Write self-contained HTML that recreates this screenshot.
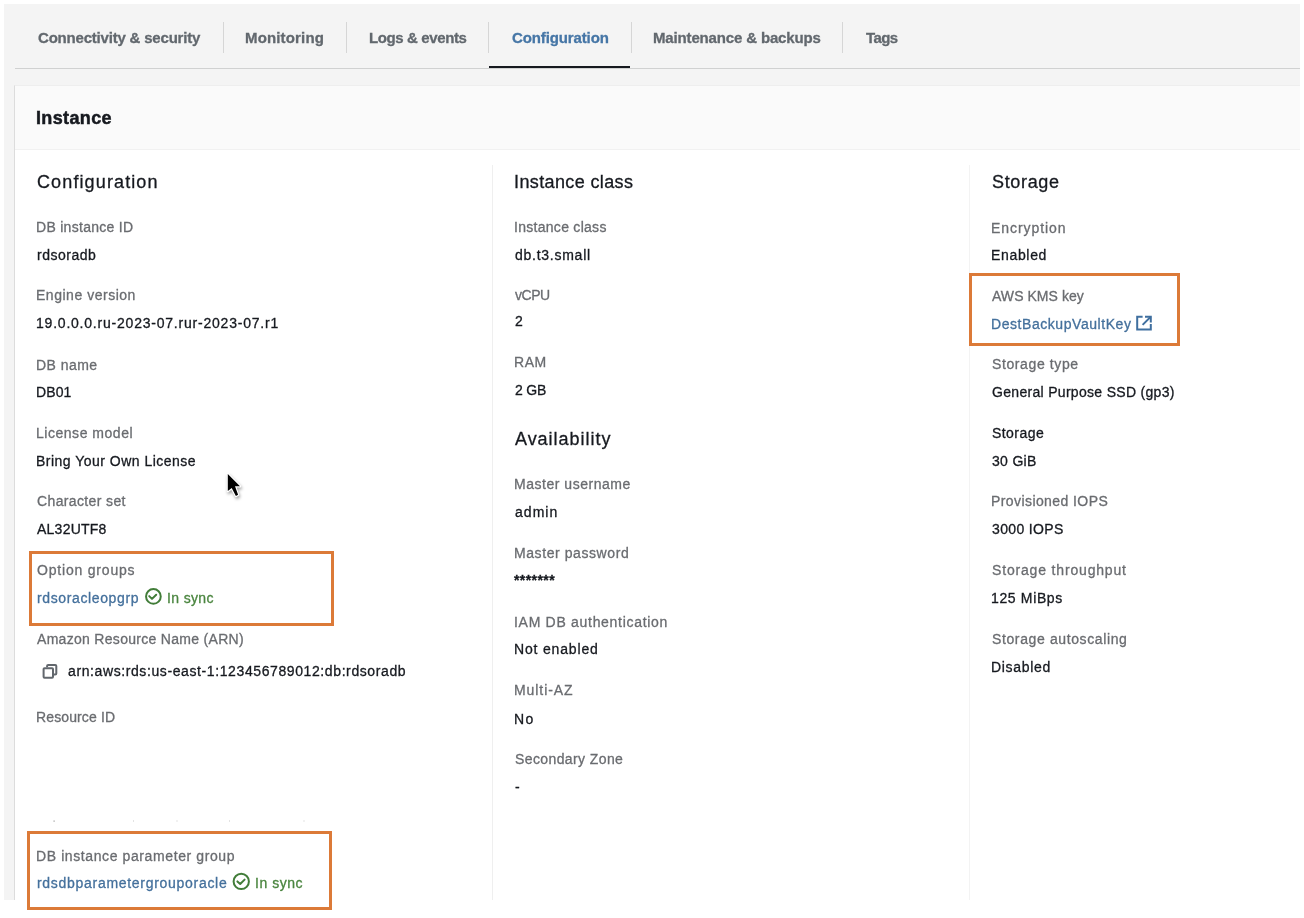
<!DOCTYPE html>
<html><head><meta charset="utf-8">
<style>
html,body{margin:0;padding:0}
body{width:1304px;height:918px;position:relative;overflow:hidden;background:#fff;font-family:"Liberation Sans",sans-serif}
.a{position:absolute}
.t{position:absolute;white-space:nowrap;line-height:1;-webkit-text-stroke:0.3px currentColor;will-change:transform}
.bg{left:4px;top:4px;width:1296px;height:896px;background:#f4f4f4}
.sep{width:1px;top:22px;height:31px;background:#d6d6d6}
.card{left:14px;top:85px;width:1286px;height:815px;background:#fff;border-left:1px solid #dcdcdc;border-top:1px solid #eeeeee;box-sizing:border-box}
.hdr{left:15px;top:86px;width:1285px;height:63px;background:#fafafa}
.hb{left:15px;top:149px;width:1285px;height:1px;background:#f1f1f1}
.cd{width:1px;top:165px;height:735px;background:#efefef}
.ob{border:3px solid #dc7a38;box-sizing:border-box}
</style></head><body>
<div class="a bg"></div>
<div class="a sep" style="left:223px"></div>
<div class="a sep" style="left:346px"></div>
<div class="a sep" style="left:488px"></div>
<div class="a sep" style="left:631px"></div>
<div class="a sep" style="left:842px"></div>
<div class="a" style="left:15px;top:68px;width:1285px;height:1px;background:#d0d1d1"></div>
<div class="a" style="left:489px;top:66px;width:141px;height:2px;background:#16191f"></div>
<div class="a card"></div>
<div class="a hdr"></div>
<div class="a hb"></div>
<div class="a cd" style="left:492px"></div>
<div class="a cd" style="left:969px;background:#f3f3f3"></div>
<div class="t" style="left:37.70px;top:30.20px;font-size:15px;font-weight:700;color:#62686e;letter-spacing:-0.199px">Connectivity &amp; security</div>
<div class="t" style="left:245.30px;top:30.20px;font-size:15px;font-weight:700;color:#62686e;letter-spacing:0.154px">Monitoring</div>
<div class="t" style="left:368.60px;top:30.20px;font-size:15px;font-weight:700;color:#62686e;letter-spacing:-0.382px">Logs &amp; events</div>
<div class="t" style="left:511.80px;top:30.20px;font-size:15px;font-weight:700;color:#4676a6;letter-spacing:-0.121px">Configuration</div>
<div class="t" style="left:653.00px;top:30.20px;font-size:15px;font-weight:700;color:#62686e;letter-spacing:-0.152px">Maintenance &amp; backups</div>
<div class="t" style="left:865.70px;top:30.20px;font-size:15px;font-weight:700;color:#62686e;letter-spacing:-0.618px">Tags</div>
<div class="t" style="left:36.00px;top:109.36px;font-size:18px;font-weight:700;color:#16191f;-webkit-text-stroke:0.5px #16191f;letter-spacing:0.355px">Instance</div>
<div class="t" style="left:37.00px;top:172.76px;font-size:18px;font-weight:400;color:#16191f;letter-spacing:1.120px">Configuration</div>
<div class="t" style="left:36.00px;top:220.15px;font-size:14px;font-weight:400;color:#6a6c70;letter-spacing:0.288px">DB instance ID</div>
<div class="t" style="left:37.00px;top:247.75px;font-size:14px;font-weight:400;color:#16191f;letter-spacing:0.504px">rdsoradb</div>
<div class="t" style="left:36.00px;top:288.45px;font-size:14px;font-weight:400;color:#6a6c70;letter-spacing:0.521px">Engine version</div>
<div class="t" style="left:36.00px;top:316.35px;font-size:14px;font-weight:400;color:#16191f;letter-spacing:0.783px">19.0.0.0.ru-2023-07.rur-2023-07.r1</div>
<div class="t" style="left:36.00px;top:357.55px;font-size:14px;font-weight:400;color:#6a6c70;letter-spacing:0.455px">DB name</div>
<div class="t" style="left:36.00px;top:384.55px;font-size:14px;font-weight:400;color:#16191f;letter-spacing:0.122px">DB01</div>
<div class="t" style="left:36.00px;top:425.95px;font-size:14px;font-weight:400;color:#6a6c70;letter-spacing:0.528px">License model</div>
<div class="t" style="left:36.00px;top:453.65px;font-size:14px;font-weight:400;color:#16191f;letter-spacing:0.481px">Bring Your Own License</div>
<div class="t" style="left:37.00px;top:494.15px;font-size:14px;font-weight:400;color:#6a6c70;letter-spacing:0.371px">Character set</div>
<div class="t" style="left:37.00px;top:522.05px;font-size:14px;font-weight:400;color:#16191f;letter-spacing:0.241px">AL32UTF8</div>
<div class="t" style="left:37.00px;top:563.45px;font-size:14px;font-weight:400;color:#6a6c70;letter-spacing:0.805px">Option groups</div>
<div class="t" style="left:37.00px;top:590.75px;font-size:14px;font-weight:400;color:#44709c;letter-spacing:0.623px">rdsoracleopgrp</div>
<div class="t" style="left:166.70px;top:590.75px;font-size:14px;font-weight:400;color:#4a853f;letter-spacing:0.358px">In sync</div>
<div class="t" style="left:37.00px;top:632.15px;font-size:14px;font-weight:400;color:#6a6c70;letter-spacing:0.300px">Amazon Resource Name (ARN)</div>
<div class="t" style="left:67.90px;top:664.35px;font-size:14px;font-weight:400;color:#16191f;letter-spacing:0.601px">arn:aws:rds:us-east-1:123456789012:db:rdsoradb</div>
<div class="t" style="left:36.00px;top:710.45px;font-size:14px;font-weight:400;color:#6a6c70;letter-spacing:0.120px">Resource ID</div>
<div class="t" style="left:36.00px;top:848.65px;font-size:14px;font-weight:400;color:#6a6c70;letter-spacing:0.600px">DB instance parameter group</div>
<div class="t" style="left:37.00px;top:875.55px;font-size:14px;font-weight:400;color:#44709c;letter-spacing:0.705px">rdsdbparametergrouporacle</div>
<div class="t" style="left:254.50px;top:875.55px;font-size:14px;font-weight:400;color:#4a853f;letter-spacing:0.525px">In sync</div>
<div class="t" style="left:514.00px;top:173.26px;font-size:18px;font-weight:400;color:#16191f;letter-spacing:0.380px">Instance class</div>
<div class="t" style="left:514.00px;top:220.35px;font-size:14px;font-weight:400;color:#6a6c70;letter-spacing:0.284px">Instance class</div>
<div class="t" style="left:515.00px;top:247.75px;font-size:14px;font-weight:400;color:#16191f;letter-spacing:0.741px">db.t3.small</div>
<div class="t" style="left:515.00px;top:288.35px;font-size:14px;font-weight:400;color:#6a6c70;letter-spacing:-0.483px">vCPU</div>
<div class="t" style="left:515.00px;top:313.95px;font-size:14px;font-weight:400;color:#16191f;letter-spacing:0.000px">2</div>
<div class="t" style="left:514.00px;top:354.95px;font-size:14px;font-weight:400;color:#6a6c70;letter-spacing:0.526px">RAM</div>
<div class="t" style="left:515.00px;top:382.65px;font-size:14px;font-weight:400;color:#16191f;letter-spacing:-0.188px">2 GB</div>
<div class="t" style="left:515.00px;top:430.36px;font-size:18px;font-weight:400;color:#16191f;letter-spacing:0.972px">Availability</div>
<div class="t" style="left:514.00px;top:477.45px;font-size:14px;font-weight:400;color:#6a6c70;letter-spacing:0.525px">Master username</div>
<div class="t" style="left:515.00px;top:505.45px;font-size:14px;font-weight:400;color:#16191f;letter-spacing:1.039px">admin</div>
<div class="t" style="left:514.00px;top:545.95px;font-size:14px;font-weight:400;color:#6a6c70;letter-spacing:0.578px">Master password</div>
<div class="t" style="left:514.40px;top:573.45px;font-size:14px;font-weight:700;color:#16191f;letter-spacing:0.418px">*******</div>
<div class="t" style="left:514.00px;top:614.65px;font-size:14px;font-weight:400;color:#6a6c70;letter-spacing:0.705px">IAM DB authentication</div>
<div class="t" style="left:514.00px;top:641.65px;font-size:14px;font-weight:400;color:#16191f;letter-spacing:0.828px">Not enabled</div>
<div class="t" style="left:514.00px;top:683.45px;font-size:14px;font-weight:400;color:#6a6c70;letter-spacing:0.920px">Multi-AZ</div>
<div class="t" style="left:514.00px;top:711.55px;font-size:14px;font-weight:400;color:#16191f;letter-spacing:1.290px">No</div>
<div class="t" style="left:515.00px;top:751.75px;font-size:14px;font-weight:400;color:#6a6c70;letter-spacing:0.397px">Secondary Zone</div>
<div class="t" style="left:515.00px;top:779.65px;font-size:14px;font-weight:400;color:#16191f;letter-spacing:0.000px">-</div>
<div class="t" style="left:992.00px;top:173.26px;font-size:18px;font-weight:400;color:#16191f;letter-spacing:0.661px">Storage</div>
<div class="t" style="left:991.00px;top:220.65px;font-size:14px;font-weight:400;color:#6a6c70;letter-spacing:0.927px">Encryption</div>
<div class="t" style="left:991.00px;top:247.75px;font-size:14px;font-weight:400;color:#16191f;letter-spacing:0.668px">Enabled</div>
<div class="t" style="left:992.00px;top:288.55px;font-size:14px;font-weight:400;color:#6a6c70;letter-spacing:0.053px">AWS KMS key</div>
<div class="t" style="left:991.00px;top:316.55px;font-size:14px;font-weight:400;color:#44709c;letter-spacing:0.554px">DestBackupVaultKey</div>
<div class="t" style="left:992.00px;top:357.05px;font-size:14px;font-weight:400;color:#6a6c70;letter-spacing:0.609px">Storage type</div>
<div class="t" style="left:992.00px;top:384.55px;font-size:14px;font-weight:400;color:#16191f;letter-spacing:0.307px">General Purpose SSD (gp3)</div>
<div class="t" style="left:992.00px;top:425.95px;font-size:14px;font-weight:400;color:#16191f;letter-spacing:0.442px">Storage</div>
<div class="t" style="left:992.00px;top:454.05px;font-size:14px;font-weight:400;color:#16191f;letter-spacing:0.308px">30 GiB</div>
<div class="t" style="left:991.00px;top:493.95px;font-size:14px;font-weight:400;color:#6a6c70;letter-spacing:0.416px">Provisioned IOPS</div>
<div class="t" style="left:992.00px;top:522.35px;font-size:14px;font-weight:400;color:#16191f;letter-spacing:0.344px">3000 IOPS</div>
<div class="t" style="left:992.00px;top:563.35px;font-size:14px;font-weight:400;color:#6a6c70;letter-spacing:0.831px">Storage throughput</div>
<div class="t" style="left:991.00px;top:590.85px;font-size:14px;font-weight:400;color:#16191f;letter-spacing:0.644px">125 MiBps</div>
<div class="t" style="left:992.00px;top:631.95px;font-size:14px;font-weight:400;color:#6a6c70;letter-spacing:0.619px">Storage autoscaling</div>
<div class="t" style="left:991.00px;top:659.75px;font-size:14px;font-weight:400;color:#16191f;letter-spacing:0.702px">Disabled</div><svg class="a" style="left:0;top:0" width="1304" height="918" viewBox="0 0 1304 918">
 <g fill="none" stroke="#427d39" stroke-width="2">
  <circle cx="153.4" cy="596.45" r="7.35"/>
  <path d="M149.2,596.1 L152,598.9 L156.2,594.7" stroke-linecap="round" stroke-linejoin="round"/>
  <circle cx="241.25" cy="881.45" r="7.65"/>
  <path d="M237.4,881.4 L240.2,884 L244.6,879.6" stroke-linecap="round" stroke-linejoin="round"/>
 </g>
 <g fill="none" stroke="#62676d" stroke-width="2" stroke-linejoin="round">
  <rect x="43.6" y="668.2" width="9.4" height="9.5" rx="0.9"/>
  <path d="M47.1,667.2 V666 Q47.1,664.9 48.2,664.9 H55.2 Q56.3,664.9 56.3,666 V673.5 Q56.3,674.6 55.2,674.6 H54"/>
 </g>
 <g fill="none" stroke="#3f6f9f" stroke-width="2">
  <path d="M1142.6,316.7 H1137.2 V329.5 H1150.8 V324"/>
  <path d="M1145,316.7 H1150.8 V322.6"/>
  <path d="M1150.6,316.9 L1142.6,324.9"/>
 </g>
 <g>
  <polygon points="227.8,474.1 240,486.3 235,486.3 238.1,494.8 235.9,496 231.7,488 227.8,491" fill="#000" stroke="#fff" stroke-width="2.4" stroke-linejoin="round" paint-order="stroke" style="filter:drop-shadow(1px 2px 1.5px rgba(0,0,0,0.35))"/>
 </g>
<g fill="#9a9a9a"><rect x="53.5" y="820.5" width="1.2" height="1.2"/><rect x="133" y="820.5" width="1" height="1" fill="#c8c8c8"/><rect x="176.5" y="820.5" width="1" height="1" fill="#c8c8c8"/><rect x="229" y="820.5" width="1" height="1" fill="#c8c8c8"/><rect x="303.5" y="820.5" width="1" height="1" fill="#c8c8c8"/></g>
</svg>
<div class="a ob" style="left:29px;top:551px;width:305px;height:75px"></div>
<div class="a ob" style="left:27px;top:831px;width:305px;height:79px"></div>
<div class="a ob" style="left:969px;top:273px;width:211px;height:73px"></div>
</body></html>
